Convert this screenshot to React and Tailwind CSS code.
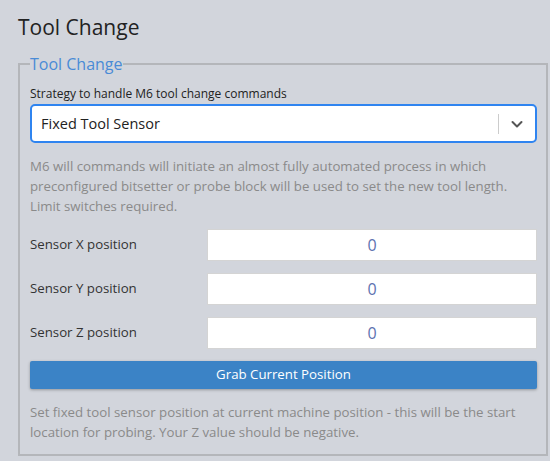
import React, { useState } from 'react';

const fields = [
    { label: 'Sensor X position', value: '0' },
    { label: 'Sensor Y position', value: '0' },
    { label: 'Sensor Z position', value: '0' },
];

const ChevronDown = () => (
    <svg width="14" height="14" viewBox="0 0 14 14" fill="none">
        <path d="M2.5 5 L7 9.5 L11.5 5" stroke="#555" strokeWidth="2" strokeLinecap="round" strokeLinejoin="round" />
    </svg>
);

const App = () => {
    const [strategy] = useState('Fixed Tool Sensor');

    return (
        <div className="min-h-[461px] bg-[#d2d5dc] pl-[18px] pr-[2px] pt-[13px] pb-[4px] font-['Open_Sans',sans-serif] text-[#333]">
            <h2 className="text-[21px] leading-[29px] text-[#222]">Tool Change</h2>

            <fieldset className="mt-[11px] border-2 border-[#b4b6ba] pl-[10px] pr-[9px] pt-[10px] pb-[12px]">
                <legend className="text-[16px] leading-[22px] text-[#4a8bd6]">Tool Change</legend>

                <label className="block text-[12px] leading-[18px] text-[#222] mb-[1px]">
                    Strategy to handle M6 tool change commands
                </label>

                {/* Select */}
                <div className="flex items-center h-[39px] bg-white border-2 border-[#2f84f0] rounded-[5px]">
                    <span className="flex-1 pl-[9px] text-[14.5px] text-[#222]">{strategy}</span>
                    <span className="w-px h-[20px] bg-[#ccc]" />
                    <span className="w-[36px] flex justify-center">
                        <ChevronDown />
                    </span>
                </div>

                <p className="mt-[13px] text-[13.25px] leading-[20px] text-[#8a8a8a]">
                    M6 will commands will initiate an almost fully automated process in which preconfigured bitsetter or probe block will be used to set the new tool length. Limit switches required.
                </p>

                <div className="mt-[13px] flex flex-col gap-[12px]">
                    {fields.map((f) => (
                        <div key={f.label} className="flex items-center">
                            <span className="w-[177px] text-[13.25px] text-[#333]">{f.label}</span>
                            <div className="flex-1 h-[32px] flex items-center justify-center bg-white border border-[#d4d4d4] text-[16px] text-[#5d72b0]">
                                {f.value}
                            </div>
                        </div>
                    ))}
                </div>

                <button className="mt-[12px] w-full h-[28px] bg-[#3b83c6] rounded-[2px] text-white text-[13.25px] shadow-[0_1px_3px_rgba(0,0,0,0.3)]">
                    Grab Current Position
                </button>

                <p className="mt-[13px] text-[13.25px] leading-[20px] text-[#8a8a8a]">
                    Set fixed tool sensor position at current machine position - this will be the start location for probing. Your Z value should be negative.
                </p>
            </fieldset>
        </div>
    );
};

export default App;
